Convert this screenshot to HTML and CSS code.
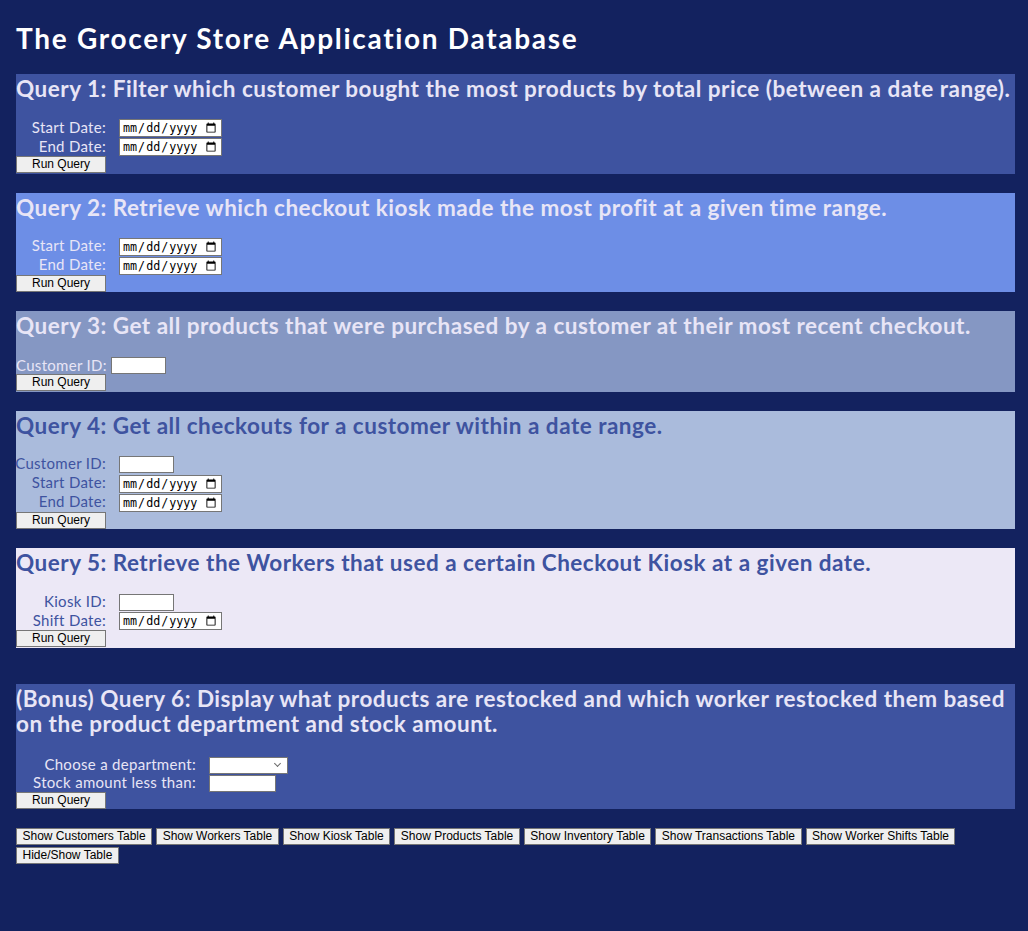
FILE: index.html
```html
<!DOCTYPE html>
<html lang="en">
<head>
<meta charset="utf-8">
<title>The Grocery Store Application Database</title>
<link rel="stylesheet" href="styles.css">
</head>
<body>
<h1 class="title">The Grocery Store Application Database</h1>

<section class="query query--dark">
  <h2 class="query__title">Query 1: Filter which customer bought the most products by total price (between a date range).</h2>
  <form class="query__form">
    <div class="fields">
      <label class="fields__label">Start Date:</label><input class="date-input" type="date">
      <label class="fields__label">End Date:</label><input class="date-input" type="date">
    </div>
    <button class="btn btn--run" type="button">Run Query</button>
  </form>
</section>

<section class="query query--bright">
  <h2 class="query__title">Query 2: Retrieve which checkout kiosk made the most profit at a given time range.</h2>
  <form class="query__form">
    <div class="fields">
      <label class="fields__label">Start Date:</label><input class="date-input" type="date">
      <label class="fields__label">End Date:</label><input class="date-input" type="date">
    </div>
    <button class="btn btn--run" type="button">Run Query</button>
  </form>
</section>

<section class="query query--muted">
  <h2 class="query__title">Query 3: Get all products that were purchased by a customer at their most recent checkout.</h2>
  <form class="query__form">
    <div class="inline-field">
      <label class="inline-field__label">Customer ID:</label>
      <input class="text-input" type="text">
    </div>
    <button class="btn btn--run" type="button">Run Query</button>
  </form>
</section>

<section class="query query--pale">
  <h2 class="query__title">Query 4: Get all checkouts for a customer within a date range.</h2>
  <form class="query__form">
    <div class="fields">
      <label class="fields__label">Customer ID:</label><input class="text-input" type="text">
      <label class="fields__label">Start Date:</label><input class="date-input" type="date">
      <label class="fields__label">End Date:</label><input class="date-input" type="date">
    </div>
    <button class="btn btn--run" type="button">Run Query</button>
  </form>
</section>

<section class="query query--light">
  <h2 class="query__title">Query 5: Retrieve the Workers that used a certain Checkout Kiosk at a given date.</h2>
  <form class="query__form">
    <div class="fields">
      <label class="fields__label">Kiosk ID:</label><input class="text-input" type="text">
      <label class="fields__label">Shift Date:</label><input class="date-input" type="date">
    </div>
    <button class="btn btn--run" type="button">Run Query</button>
  </form>
</section>

<section class="query query--dark query--bonus">
  <h2 class="query__title">(Bonus) Query 6: Display what products are restocked and which worker restocked them based on the product department and stock amount.</h2>
  <form class="query__form">
    <div class="fields fields--wide">
      <label class="fields__label">Choose a department:</label>
      <span class="select-wrap"><select class="select-input"><option></option></select></span>
      <label class="fields__label">Stock amount less than:</label><input class="text-input text-input--wide" type="text">
    </div>
    <button class="btn btn--run" type="button">Run Query</button>
  </form>
</section>

<div class="table-buttons">
  <button class="btn" type="button">Show Customers Table</button>
  <button class="btn" type="button">Show Workers Table</button>
  <button class="btn" type="button">Show Kiosk Table</button>
  <button class="btn" type="button">Show Products Table</button>
  <button class="btn" type="button">Show Inventory Table</button>
  <button class="btn" type="button">Show Transactions Table</button>
  <button class="btn" type="button">Show Worker Shifts Table</button>
  <button class="btn" type="button">Hide/Show Table</button>
</div>
</body>
</html>
```

FILE: styles.css
```css
html {
  background: #13225f;
}

body {
  margin: 0;
  padding: 0 13px 20px 16px;
  background: #13225f;
  font-family: Lato, "Noto Sans", sans-serif;
  color: #e8e5f6;
}

.title {
  margin: 21px 0 19px;
  font-size: 28px;
  line-height: 34px;
  font-weight: 700;
  letter-spacing: 1.7px;
  color: #ffffff;
}

.query {
  margin: 0 0 19px;
  padding-bottom: 0.5px;
}

.query--bonus {
  margin-top: 36px;
}

.query--dark {
  background: #3e53a0;
  color: #e8e5f6;
}

.query--bright {
  background: #6d8ee6;
  color: #e8e5f6;
}

.query--muted {
  background: #8597c3;
  color: #e8e5f6;
}

.query--pale {
  background: #aabbdc;
  color: #3e53a0;
}

.query--light {
  background: #ece8f6;
  color: #3e53a0;
}

.query__title {
  margin: 0 0 18px;
  padding-top: 2px;
  font-size: 22.5px;
  line-height: 25px;
  font-weight: 700;
  letter-spacing: 0.5px;
}

.query--bonus .query__title {
  margin-bottom: 21px;
}

.query__form {
  margin: 0;
  display: flex;
  flex-direction: column;
  align-items: flex-start;
}

.fields {
  display: grid;
  grid-template-columns: 90px max-content;
  grid-auto-rows: 18px;
  column-gap: 13px;
  row-gap: 1px;
  align-items: center;
}

.fields--wide {
  grid-template-columns: 180px max-content;
  grid-auto-rows: 17px;
}

.fields__label,
.inline-field__label {
  font-size: 15px;
  line-height: 16px;
  letter-spacing: 0.3px;
  white-space: nowrap;
}

.fields__label {
  justify-self: end;
  text-align: right;
  margin-bottom: 3px;
}

.inline-field {
  display: flex;
  align-items: center;
  gap: 4px;
  height: 18px;
}

.date-input {
  box-sizing: border-box;
  width: 103px;
  height: 18px;
  margin: 0;
  padding: 0 2px;
  border: 1px solid #767676;
  background: #ffffff;
  color: #000000;
  font-family: "DejaVu Sans Mono", monospace;
  font-size: 11.7px;
}

.text-input {
  box-sizing: border-box;
  width: 55px;
  height: 17px;
  margin: 0;
  padding: 0 2px;
  border: 1px solid #767676;
  background: #ffffff;
  font-size: 12px;
}

.text-input--wide {
  width: 67px;
}

.select-wrap {
  position: relative;
  display: inline-block;
  height: 17px;
}

.select-wrap::after {
  content: "";
  position: absolute;
  right: 8px;
  top: 4px;
  width: 4px;
  height: 4px;
  border-right: 1.5px solid #6b6b6b;
  border-bottom: 1.5px solid #6b6b6b;
  transform: rotate(45deg);
  pointer-events: none;
}

.select-input {
  box-sizing: border-box;
  display: block;
  width: 79px;
  height: 17px;
  margin: 0;
  padding: 0;
  border: 1px solid #767676;
  border-radius: 0;
  background: #ffffff;
  font-size: 12px;
  appearance: none;
  -webkit-appearance: none;
}

.btn {
  box-sizing: border-box;
  height: 17px;
  margin: 0;
  padding: 0 5.5px;
  border: 1px solid #767676;
  border-radius: 0;
  background: #efefef;
  color: #000000;
  font-family: "Liberation Sans", Arial, sans-serif;
  font-size: 12px;
  line-height: 15px;
  white-space: nowrap;
}

.btn--run {
  width: 90px;
}

.table-buttons {
  display: flex;
  flex-wrap: wrap;
  gap: 2px 4px;
}
```
